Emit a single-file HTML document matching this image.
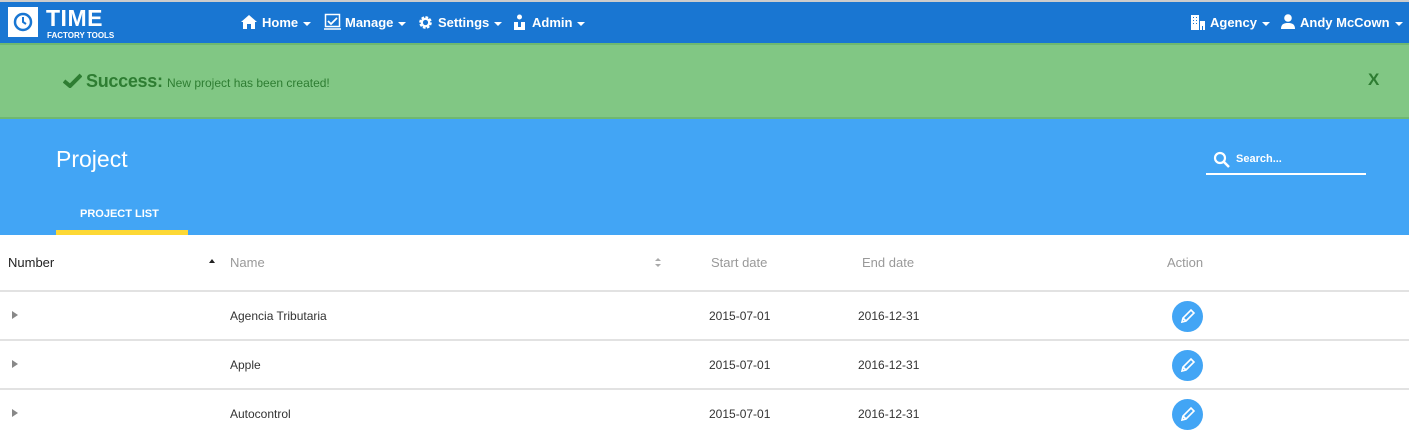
<!DOCTYPE html>
<html><head><meta charset="utf-8"><style>
*{margin:0;padding:0;box-sizing:border-box}
body{width:1409px;height:420px;overflow:hidden;font-family:"Liberation Sans",Arial,sans-serif;background:#fff;position:relative}
.a{position:absolute;white-space:nowrap}
.nav{top:0;left:0;width:1409px;height:43px;background:#1976d2;border-top:2px solid #ccc}
.ni{color:#fff;font-size:13px;font-weight:bold;top:15px}
.car{display:inline-block;border-left:4px solid transparent;border-right:4px solid transparent;border-top:4px solid #fff;vertical-align:middle;margin-left:5px}
.green{top:43px;left:0;width:1409px;height:76px;background:#81c784;border:2px solid #6fb870;border-left:0;border-right:0}
.blue{top:119px;left:0;width:1409px;height:116px;background:#42a5f5}
.th{font-size:13px;color:#999;top:255px}
.td{font-size:12px;color:#333}
.line{left:0;width:1409px;height:2px;background:#e2e2e2}
.tri{border-top:4px solid transparent;border-bottom:4px solid transparent;border-left:6px solid #888}
.btn{width:31px;height:31px;border-radius:50%;background:#42a5f5}
</style></head><body>
<div class="a nav"></div>
<div class="a" style="left:8px;top:7px;width:30px;height:30px;background:#fff;"></div>
<svg class="a" style="left:12px;top:11px" width="22" height="22" viewBox="0 0 22 22"><circle cx="11" cy="11" r="8" fill="none" stroke="#1976d2" stroke-width="2.5"/><path d="M11 6v5l3 2" stroke="#1976d2" stroke-width="2" fill="none"/></svg>
<div class="a" style="left:46px;top:5px;color:#fff;font-size:23px;font-weight:bold;letter-spacing:0.5px">TIME</div>
<div class="a" style="left:47px;top:31px;color:#fff;font-size:8px;font-weight:bold">FACTORY TOOLS</div>
<svg class="a" style="left:240px;top:14px" width="18" height="16" viewBox="0 0 18 16"><path d="M9 1L1 8h2v7h4v-5h4v5h4V8h2z" fill="#fff"/></svg>
<div class="a ni" style="left:262px">Home<span class="car"></span></div>
<svg class="a" style="left:324px;top:13px" width="17" height="17" viewBox="0 0 17 17"><rect x="1.5" y="1.5" width="14" height="12" fill="none" stroke="#fff" stroke-width="1.5"/><path d="M4 8l3 3 6-6" stroke="#fff" stroke-width="1.8" fill="none"/><path d="M0 16h17" stroke="#fff" stroke-width="1.5"/></svg>
<div class="a ni" style="left:345px">Manage<span class="car"></span></div>
<svg class="a" style="left:418px;top:15px" width="15" height="15" viewBox="0 0 16 16"><circle cx="8" cy="8" r="5" fill="none" stroke="#fff" stroke-width="3.5" stroke-dasharray="2.5 1.4"/><circle cx="8" cy="8" r="4" fill="none" stroke="#fff" stroke-width="2.5"/></svg>
<div class="a ni" style="left:438px">Settings<span class="car"></span></div>
<svg class="a" style="left:513px;top:14px" width="13" height="16" viewBox="0 0 13 16"><circle cx="6.5" cy="3" r="2.5" fill="#fff"/><path d="M1 16V8h4v5h3V8h4v8z" fill="#fff"/></svg>
<div class="a ni" style="left:532px">Admin<span class="car"></span></div>
<svg class="a" style="left:1190px;top:14px" width="16" height="16" viewBox="0 0 16 16"><path d="M1 1h8v15H1zM10 7h5v9h-5z" fill="#fff"/><path d="M3 3h1v1H3zM6 3h1v1H6zM3 6h1v1H3zM6 6h1v1H6zM3 9h1v1H3zM6 9h1v1H6zM12 12h1v4h-1z" fill="#1976d2"/></svg>
<div class="a ni" style="left:1210px">Agency<span class="car"></span></div>
<svg class="a" style="left:1280px;top:14px" width="16" height="15" viewBox="0 0 16 15"><circle cx="8" cy="4" r="3.8" fill="#fff"/><path d="M1 15c0-5 3-6 7-6s7 1 7 6z" fill="#fff"/></svg>
<div class="a ni" style="left:1300px">Andy McCown<span class="car"></span></div>

<div class="a green"></div>
<svg class="a" style="left:63px;top:73px" width="19" height="15" viewBox="0 0 19 15"><path d="M1 8l6 5L18 2" stroke="#2e7d32" stroke-width="4" fill="none"/></svg>
<div class="a" style="left:86px;top:71px;color:#2e7d32;font-size:18px;font-weight:bold;letter-spacing:-0.3px">Success:</div>
<div class="a" style="left:167px;top:76px;color:#2e7d32;font-size:12px">New project has been created!</div>
<div class="a" style="left:1368px;top:70px;color:#2e7d32;font-size:17px;font-weight:bold">X</div>

<div class="a blue"></div>
<div class="a" style="left:56px;top:146px;color:#fff;font-size:23px">Project</div>
<svg class="a" style="left:1213px;top:151px" width="18" height="18" viewBox="0 0 18 18"><circle cx="7" cy="7" r="5" fill="none" stroke="#fff" stroke-width="2.2"/><path d="M11 11l5 5" stroke="#fff" stroke-width="2.5"/></svg>
<div class="a" style="left:1236px;top:153px;color:#fff;font-size:11px;font-weight:bold">Search...</div>
<div class="a" style="left:1206px;top:173px;width:160px;height:2px;background:#fff"></div>
<div class="a" style="left:80px;top:208px;color:#fff;font-size:11px;font-weight:bold">PROJECT LIST</div>
<div class="a" style="left:56px;top:230px;width:132px;height:5px;background:#fdd835"></div>

<div class="a th" style="left:8px;color:#222">Number</div>
<div class="a" style="left:209px;top:259px;border-left:3px solid transparent;border-right:3px solid transparent;border-bottom:4px solid #222"></div>
<div class="a th" style="left:230px">Name</div>
<div class="a" style="left:655px;top:258px;border-left:3px solid transparent;border-right:3px solid transparent;border-bottom:3px solid #aaa"></div>
<div class="a" style="left:655px;top:264px;border-left:3px solid transparent;border-right:3px solid transparent;border-top:3px solid #aaa"></div>
<div class="a th" style="left:711px">Start date</div>
<div class="a th" style="left:862px">End date</div>
<div class="a th" style="left:1167px">Action</div>
<div class="a line" style="top:290px"></div>
<div class="a line" style="top:339px"></div>
<div class="a line" style="top:388px"></div>

<div class="a tri" style="left:12px;top:311px"></div>
<div class="a td" style="left:230px;top:309px">Agencia Tributaria</div>
<div class="a td" style="left:709px;top:309px">2015-07-01</div>
<div class="a td" style="left:858px;top:309px">2016-12-31</div>
<div class="a btn" style="left:1172px;top:301px"></div>

<div class="a tri" style="left:12px;top:360px"></div>
<div class="a td" style="left:230px;top:358px">Apple</div>
<div class="a td" style="left:709px;top:358px">2015-07-01</div>
<div class="a td" style="left:858px;top:358px">2016-12-31</div>
<div class="a btn" style="left:1172px;top:350px"></div>

<div class="a tri" style="left:12px;top:409px"></div>
<div class="a td" style="left:230px;top:407px">Autocontrol</div>
<div class="a td" style="left:709px;top:407px">2015-07-01</div>
<div class="a td" style="left:858px;top:407px">2016-12-31</div>
<div class="a btn" style="left:1172px;top:399px"></div>

<svg class="a" style="left:1179px;top:308px" width="17" height="17" viewBox="0 0 17 17"><path d="M3 14l1-4 8-8 3 3-8 8z M4.5 10.5l2 2" stroke="#fff" stroke-width="1.6" fill="none"/></svg>
<svg class="a" style="left:1179px;top:357px" width="17" height="17" viewBox="0 0 17 17"><path d="M3 14l1-4 8-8 3 3-8 8z M4.5 10.5l2 2" stroke="#fff" stroke-width="1.6" fill="none"/></svg>
<svg class="a" style="left:1179px;top:406px" width="17" height="17" viewBox="0 0 17 17"><path d="M3 14l1-4 8-8 3 3-8 8z M4.5 10.5l2 2" stroke="#fff" stroke-width="1.6" fill="none"/></svg>
</body></html>
